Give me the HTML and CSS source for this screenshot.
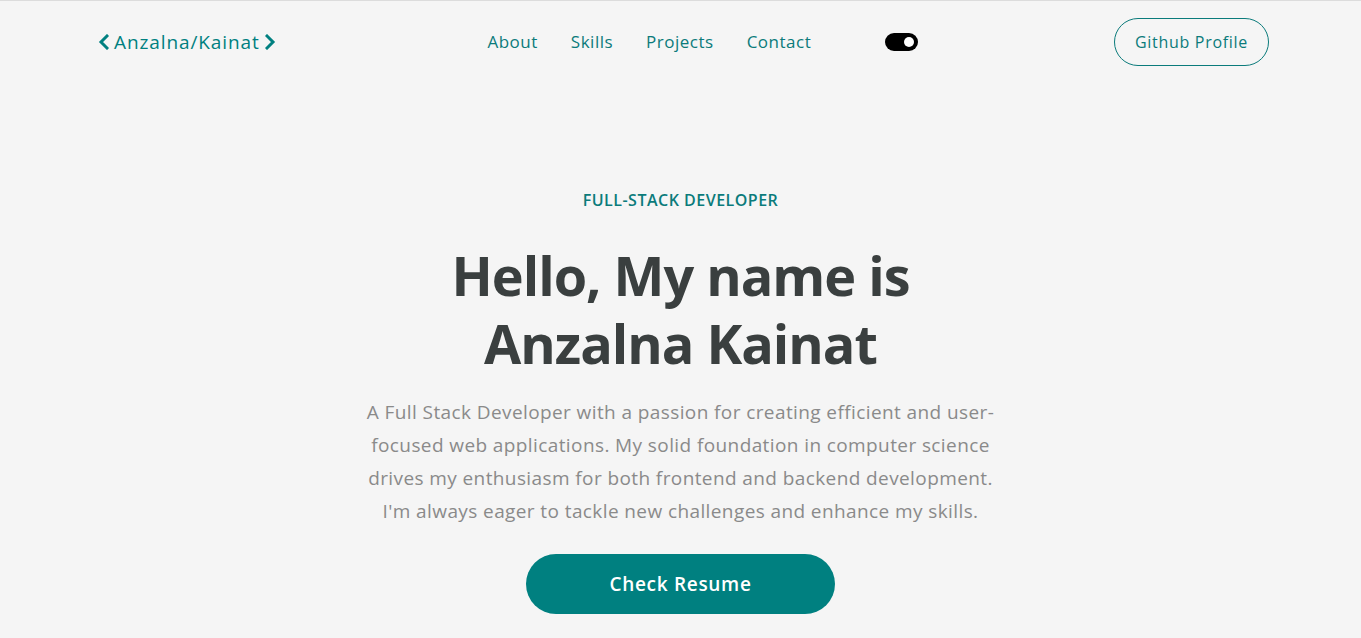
FILE: index.html
```html
<!DOCTYPE html>
<html lang="en">
<head>
<meta charset="utf-8">
<title>Anzalna Kainat</title>
<link rel="stylesheet" href="styles.css">
</head>
<body>
<header class="topbar">
  <a class="logo" href="#">
    <svg class="chev" width="11" height="16" viewBox="0 0 11 16"><path d="M9 2 L3 8 L9 14" fill="none" stroke="#008080" stroke-width="3" stroke-linecap="square"/></svg>
    <span class="logo-text">Anzalna/Kainat</span>
    <svg class="chev" width="11" height="16" viewBox="0 0 11 16"><path d="M2 2 L8 8 L2 14" fill="none" stroke="#008080" stroke-width="3" stroke-linecap="square"/></svg>
  </a>
  <div class="middle">
    <nav class="nav">
      <a href="#">About</a>
      <a href="#">Skills</a>
      <a href="#">Projects</a>
      <a href="#">Contact</a>
    </nav>
    <span class="toggle"><span class="knob"></span></span>
  </div>
  <a class="gh-btn" href="#">Github Profile</a>
</header>
<main class="hero">
  <p class="eyebrow">FULL-STACK DEVELOPER</p>
  <h1 class="title">Hello, My name is<br>Anzalna Kainat</h1>
  <p class="lead">A Full Stack Developer with a passion for creating efficient and user-<br>focused web applications. My solid foundation in computer science<br>drives my enthusiasm for both frontend and backend development.<br>I'm always eager to tackle new challenges and enhance my skills.</p>
  <a class="cta" href="#">Check Resume</a>
</main>
</body>
</html>
```
FILE: styles.css
```css
* { box-sizing: border-box; }
html, body { margin: 0; padding: 0; }
body {
  background: #f5f5f5;
  border-top: 1px solid #dcdcdc;
  font-family: "Open Sans", "Noto Sans", sans-serif;
  color: #3a3f3f;
  height: 638px;
  overflow: hidden;
}
a { text-decoration: none; }
.topbar {
  display: flex;
  align-items: center;
  justify-content: space-between;
  height: 82px;
  padding: 0 92px 0 98px;
}
.logo {
  display: flex;
  align-items: center;
  gap: 5px;
  color: #008080;
  font-size: 19px;
  font-weight: 500;
  letter-spacing: 0.9px;
}
.chev { display: block; }
.middle {
  display: flex;
  align-items: center;
  padding-left: 16px;
}
.nav {
  display: flex;
  gap: 33px;
  line-height: 22px;
}
.nav a {
  color: #0b7b7b;
  font-size: 17px;
  font-weight: 500;
  letter-spacing: 0.5px;
}
.toggle {
  margin-left: 74px;
  width: 33px;
  height: 18px;
  border-radius: 9px;
  background: #000;
  display: flex;
  align-items: center;
  justify-content: flex-end;
  padding-right: 4px;
}
.knob {
  width: 10px;
  height: 10px;
  border-radius: 50%;
  background: #fff;
}
.gh-btn {
  display: flex;
  align-items: center;
  justify-content: center;
  width: 155px;
  height: 48px;
  border: 1px solid #0b7b7b;
  border-radius: 24px;
  color: #0b7b7b;
  font-size: 16px;
  font-weight: 500;
  letter-spacing: 0.7px;
}
.hero {
  display: flex;
  flex-direction: column;
  align-items: center;
  text-align: center;
  padding-top: 106px;
}
.eyebrow {
  margin: 0;
  color: #0b7b7b;
  font-size: 16px;
  font-weight: 600;
  line-height: 22px;
  letter-spacing: 0.5px;
}
.title {
  margin: 30px 0 0;
  font-size: 54px;
  font-weight: 700;
  line-height: 68px;
  letter-spacing: -1px;
  color: #3a3f3f;
}
.lead {
  margin: 19px 0 0;
  font-size: 19px;
  line-height: 33px;
  letter-spacing: 0.4px;
  color: #8a8a8a;
  font-weight: 400;
}
.cta {
  margin-top: 26px;
  display: flex;
  align-items: center;
  justify-content: center;
  width: 309px;
  height: 60px;
  border-radius: 30px;
  background: #008080;
  color: #fff;
  font-size: 19px;
  font-weight: 600;
  letter-spacing: 0.7px;
}
```
